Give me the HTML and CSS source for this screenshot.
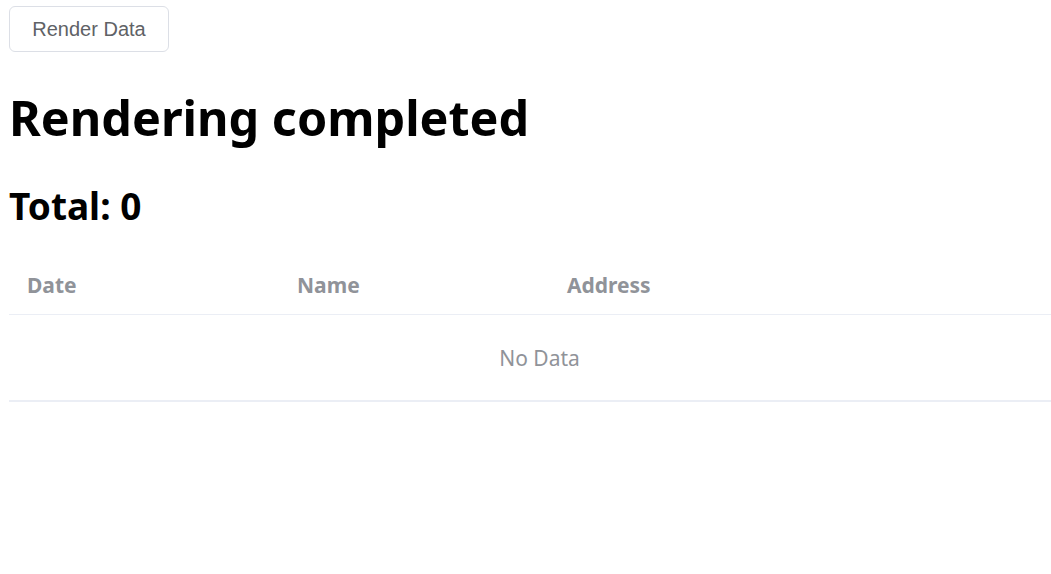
FILE: index.html
```html
<!DOCTYPE html>
<html lang="en">
<head>
<meta charset="utf-8">
<title>Render Data</title>
<link rel="stylesheet" href="styles.css">
</head>
<body>
<div class="page">
  <button class="btn" type="button">Render Data</button>
  <h1 class="title">Rendering completed</h1>
  <h2 class="total">Total: 0</h2>
  <div class="table">
    <div class="thead">
      <div class="th">Date</div>
      <div class="th">Name</div>
      <div class="th">Address</div>
      <div class="th th-fill"></div>
    </div>
    <div class="empty">No Data</div>
  </div>
</div>
</body>
</html>
```

FILE: styles.css
```css
html, body {
  margin: 0;
  padding: 0;
  background: #ffffff;
  overflow: hidden;
}
.page {
  padding: 6px 0 0 9px;
  font-family: "Noto Sans", "Open Sans", sans-serif;
  color: #000;
}
.btn {
  display: block;
  box-sizing: border-box;
  width: 160px;
  height: 46px;
  padding: 0;
  margin: 0;
  background: #fff;
  border: 1px solid #dcdfe6;
  border-radius: 6px;
  color: #606266;
  font-family: "Liberation Sans", Arial, sans-serif;
  font-size: 20px;
  line-height: 1;
}
.title {
  margin: 36px 0 0 0;
  font-size: 48.5px;
  line-height: 58px;
  font-weight: 700;
}
.total {
  margin: 38px 0 0 0;
  font-size: 37px;
  line-height: 44px;
  font-weight: 700;
}
.table {
  width: 1061px;
  margin-top: 25px;
  font-size: 21px;
  color: #909399;
}
.thead {
  display: flex;
  height: 62px;
  padding-top: 3px;
  box-sizing: border-box;
  align-items: center;
  border-bottom: 1px solid #ebeef5;
}
.th {
  width: 270px;
  box-sizing: border-box;
  padding-left: 18px;
  font-weight: 700;
}
.th-fill {
  flex: 1;
}
.empty {
  height: 85px;
  display: flex;
  align-items: center;
  justify-content: center;
  border-bottom: 2px solid #ebeef5;
}
```
